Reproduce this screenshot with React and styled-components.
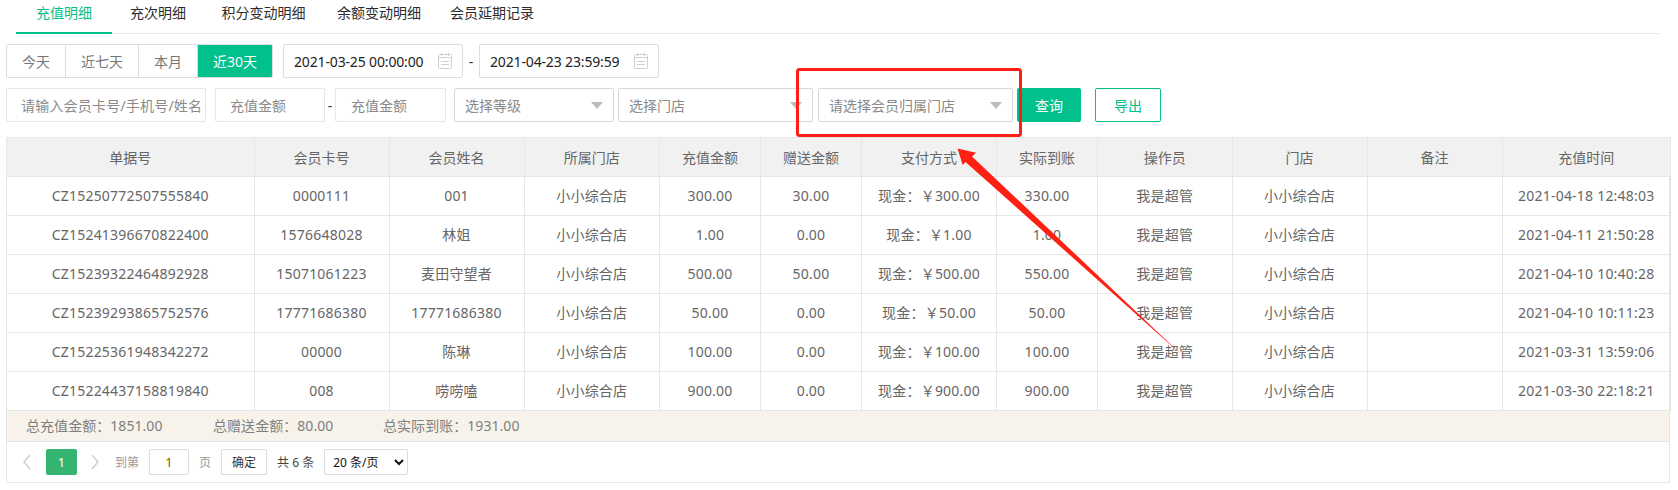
import React from 'react';
import styled, { createGlobalStyle } from 'styled-components';

const Global = createGlobalStyle`
  html, body { margin: 0; padding: 0; background: #fff; }
  body { font-family: "Noto Sans", "Noto Sans CJK SC", sans-serif; font-size: 14px; color: #666; }
  * { box-sizing: border-box; }
`;

const Page = styled.div`
  position: relative;
  width: 1678px;
  height: 490px;
  overflow: hidden;
`;

const Tabs = styled.div`
  display: flex;
  height: 34px;
  margin: 0 18px 0 16px;
  border-bottom: 1px solid #e6e6e6;
`;

const Tab = styled.div`
  height: 34px;
  padding: 0 ${p => p.$pad}px;
  line-height: 26px;
  color: ${p => (p.$active ? '#00c18c' : '#2b2b2b')};
  border-bottom: ${p => (p.$active ? '2px solid #00c18c' : 'none')};
  white-space: nowrap;
`;

const Row = styled.div`
  display: flex;
  align-items: center;
  height: 34px;
  margin: ${p => p.$top}px 0 0 6px;
`;

const Segment = styled.div`
  display: flex;
  height: 34px;
  border: 1px solid #ddd;
  border-radius: 2px;
  overflow: hidden;
`;

const SegButton = styled.div`
  display: flex;
  align-items: center;
  justify-content: center;
  width: ${p => p.$w}px;
  color: ${p => (p.$active ? '#fff' : '#777')};
  background: ${p => (p.$active ? '#00c18c' : '#fff')};
  border-left: ${p => (p.$first ? 'none' : '1px solid #ddd')};
`;

const DateField = styled.div`
  display: flex;
  align-items: center;
  justify-content: space-between;
  width: 180px;
  height: 34px;
  margin-left: ${p => p.$left || 0}px;
  padding: 0 10px 0 10px;
  border: 1px solid #ddd;
  border-radius: 2px;
  color: #222;
  letter-spacing: -0.15px;
`;

const Dash = styled.span`
  width: ${p => p.$w}px;
  text-align: center;
  color: #333;
`;

const Field = styled.div`
  display: flex;
  align-items: center;
  justify-content: space-between;
  width: ${p => p.$w}px;
  height: 34px;
  margin-left: ${p => p.$left || 0}px;
  padding: 0 10px 0 ${p => p.$padLeft || 11}px;
  border: 1px solid ${p => (p.$select ? '#d8d8d8' : '#e6e6e6')};
  border-radius: 2px;
  color: #8a8a8a;
  letter-spacing: ${p => p.$track || 0}px;
  white-space: nowrap;
  overflow: hidden;
`;

const Caret = styled.i`
  width: 0;
  height: 0;
  flex: none;
  border-left: 6px solid transparent;
  border-right: 6px solid transparent;
  border-top: 7px solid #bdbdbd;
`;

const Primary = styled.div`
  display: flex;
  align-items: center;
  justify-content: center;
  width: 64px;
  height: 34px;
  margin-left: 4px;
  background: #00c18c;
  color: #fff;
  border-radius: 2px;
`;

const Outline = styled.div`
  display: flex;
  align-items: center;
  justify-content: center;
  width: 66px;
  height: 34px;
  margin-left: 14px;
  border: 1px solid #00c18c;
  color: #00c18c;
  border-radius: 2px;
`;

const Frame = styled.div`
  width: 1664px;
  margin: 15px 0 0 6px;
  border: 1px solid #e6e6e6;
  border-top: none;
`;

const Table = styled.table`
  width: 1664px;
  margin: 0 -1px;
  table-layout: fixed;
  border-collapse: collapse;
`;

const Th = styled.th`
  height: 39px;
  padding: 0;
  font-weight: 400;
  color: #666;
  background: #f1f1f1;
  border: 1px solid #e6e6e6;
  text-align: center;
`;

const Td = styled.td`
  height: 39px;
  padding: 0 0 2px;
  color: #666;
  border: 1px solid #e6e6e6;
  text-align: center;
  letter-spacing: 0.22px;
  white-space: nowrap;
`;

const Summary = styled.div`
  display: flex;
  align-items: center;
  height: 31px;
  padding: 0 0 2px 19px;
  background: #f7f3ea;
  border-bottom: 1px solid #e6e6e6;
  color: #808080;
  letter-spacing: 0.05px;
`;

const SummaryItem = styled.span`
  width: ${p => p.$w}px;
  white-space: nowrap;
`;

const Pager = styled.div`
  display: flex;
  align-items: center;
  height: 40px;
  padding-left: 13px;
  color: #999;
  font-size: 12px;
`;

const Chevron = styled.svg`
  width: 10px;
  height: 16px;
  margin: ${p => p.$m};
  fill: none;
  stroke: #cfcfcf;
  stroke-width: 1.5;
`;

const PageNo = styled.div`
  display: flex;
  align-items: center;
  justify-content: center;
  width: 31px;
  height: 26px;
  background: #33b470;
  color: #fff;
  border-radius: 2px;
  font-size: 13px;
`;

const PageInput = styled.div`
  display: flex;
  align-items: center;
  justify-content: center;
  width: 40px;
  height: 26px;
  margin: 0 10px;
  border: 1px solid #ddd;
  border-radius: 2px;
  color: #8a5a00;
  font-size: 13px;
`;

const Confirm = styled.div`
  display: flex;
  align-items: center;
  justify-content: center;
  width: 46px;
  height: 26px;
  margin: 0 10px;
  border: 1px solid #ddd;
  border-radius: 2px;
  color: #333;
`;

const Total = styled.span`
  color: #444;
  white-space: nowrap;
`;

const SizeSelect = styled.select`
  width: 84px;
  height: 26px;
  margin-left: 10px;
  padding: 0 0 0 4px;
  border: 1px solid #ddd;
  border-radius: 2px;
  background: #fff;
  color: #111;
  font-family: inherit;
  font-size: 12px;
`;

const Overlay = styled.svg`
  position: absolute;
  left: 0;
  top: 0;
  width: 1678px;
  height: 490px;
  pointer-events: none;
`;

const Calendar = () => (
  <svg width="14" height="16" viewBox="0 0 14 16" fill="none" stroke="#cfcfcf" strokeWidth="1">
    <rect x="0.5" y="1.5" width="13" height="14" rx="1" />
    <path d="M0.5 4.5H13.5M3.5 0V3M10.5 0V3M3 8.5H11M3 11.5H11" />
  </svg>
);

const columns = [
  ['单据号', 247.5], ['会员卡号', 135], ['会员姓名', 135], ['所属门店', 135.5], ['充值金额', 101],
  ['赠送金额', 101], ['支付方式', 135], ['实际到账', 101], ['操作员', 134.5], ['门店', 135],
  ['备注', 135], ['充值时间', 168.5],
];

const rows = [
  ['CZ15250772507555840', '0000111', '001', '300.00', '30.00', '330.00', '2021-04-18 12:48:03'],
  ['CZ15241396670822400', '1576648028', '林姐', '1.00', '0.00', '1.00', '2021-04-11 21:50:28'],
  ['CZ15239322464892928', '15071061223', '麦田守望者', '500.00', '50.00', '550.00', '2021-04-10 10:40:28'],
  ['CZ15239293865752576', '17771686380', '17771686380', '50.00', '0.00', '50.00', '2021-04-10 10:11:23'],
  ['CZ15225361948342272', '00000', '陈琳', '100.00', '0.00', '100.00', '2021-03-31 13:59:06'],
  ['CZ15224437158819840', '008', '唠唠嗑', '900.00', '0.00', '900.00', '2021-03-30 22:18:21'],
];

export default function App() {
  return (
    <Page>
      <Global />
      <Tabs>
        <Tab $active $pad={20}>充值明细</Tab>
        <Tab $pad={18}>充次明细</Tab>
        <Tab $pad={17.5}>积分变动明细</Tab>
        <Tab $pad={14}>余额变动明细</Tab>
        <Tab $pad={15}>会员延期记录</Tab>
      </Tabs>

      <Row $top={10}>
        <Segment>
          <SegButton $first $w={58}>今天</SegButton>
          <SegButton $w={73}>近七天</SegButton>
          <SegButton $w={59}>本月</SegButton>
          <SegButton $active $w={75}>近30天</SegButton>
        </Segment>
        <DateField $left={10}>2021-03-25 00:00:00<Calendar /></DateField>
        <Dash $w={16}>-</Dash>
        <DateField>2021-04-23 23:59:59<Calendar /></DateField>
      </Row>

      <Row $top={10}>
        <Field $w={200} $padLeft={14} $track={0.2}>请输入会员卡号/手机号/姓名</Field>
        <Field $w={110} $left={9} $padLeft={14}>充值金额</Field>
        <Dash $w={10}>-</Dash>
        <Field $w={111} $padLeft={15}>充值金额</Field>
        <Field $w={160} $left={8} $select $padLeft={10}>选择等级<Caret /></Field>
        <Field $w={195} $left={4} $select $padLeft={10}>选择门店<Caret /></Field>
        <Field $w={195} $left={5} $select $padLeft={10}>请选择会员归属门店<Caret /></Field>
        <Primary>查询</Primary>
        <Outline>导出</Outline>
      </Row>

      <Frame>
        <Table>
          <colgroup>
            {columns.map(([name, w]) => <col key={name} style={{ width: w }} />)}
          </colgroup>
          <thead>
            <tr>{columns.map(([name]) => <Th key={name}>{name}</Th>)}</tr>
          </thead>
          <tbody>
            {rows.map(r => (
              <tr key={r[0]}>
                <Td>{r[0]}</Td>
                <Td>{r[1]}</Td>
                <Td>{r[2]}</Td>
                <Td>小小综合店</Td>
                <Td>{r[3]}</Td>
                <Td>{r[4]}</Td>
                <Td>现金：￥{r[3]}</Td>
                <Td>{r[5]}</Td>
                <Td>我是超管</Td>
                <Td>小小综合店</Td>
                <Td />
                <Td>{r[6]}</Td>
              </tr>
            ))}
          </tbody>
        </Table>
        <Summary>
          <SummaryItem $w={187}>总充值金额：1851.00</SummaryItem>
          <SummaryItem $w={170}>总赠送金额：80.00</SummaryItem>
          <SummaryItem $w={170}>总实际到账：1931.00</SummaryItem>
        </Summary>
        <Pager>
          <Chevron $m="0 14px 0 2px" viewBox="0 0 10 16"><path d="M8 1L2 8l6 7" /></Chevron>
          <PageNo>1</PageNo>
          <Chevron $m="0 15px 0 13px" viewBox="0 0 10 16"><path d="M2 1l6 7-6 7" /></Chevron>
          到第
          <PageInput>1</PageInput>
          页
          <Confirm>确定</Confirm>
          <Total>共 6 条</Total>
          <SizeSelect defaultValue="20">
            <option value="20">20 条/页</option>
          </SizeSelect>
        </Pager>
      </Frame>

      <Overlay viewBox="0 0 1678 490">
        <rect x="797.5" y="69.5" width="223" height="66" rx="2" fill="none" stroke="#ff2014" strokeWidth="3" />
        <polygon points="957.5,148.5 976,152.7 972,156.5 1183,356 965.5,162 962.7,165" fill="#ff2014" />
      </Overlay>
    </Page>
  );
}
